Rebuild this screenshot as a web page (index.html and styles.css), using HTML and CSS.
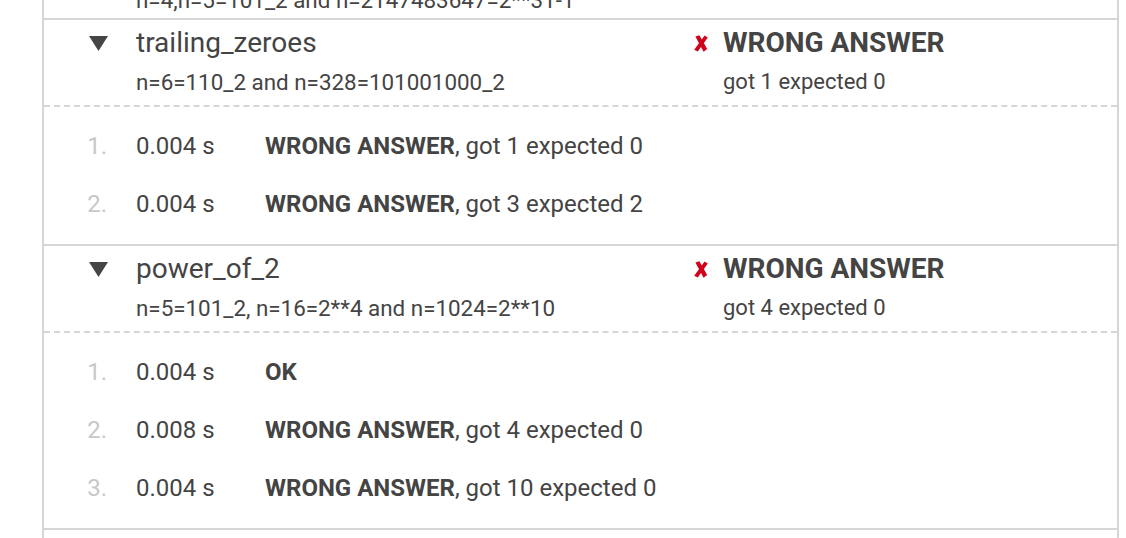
FILE: index.html
```html
<!DOCTYPE html>
<html>
<head>
<meta charset="utf-8">
<link rel="stylesheet" href="styles.css">
</head>
<body>
<div class="results">
  <section class="problem collapsed">
    <div class="head">
      <span class="toggle"><svg width="19" height="15" viewBox="0 0 19 15"><polygon points="0,0 19,0 9.5,15" fill="#454545"/></svg></span>
      <span class="title">is_power</span>
      <span class="mark"></span>
      <span class="status">OK</span>
      <span class="desc">n=4,n=5=101_2 and n=2147483647=2**31-1</span>
      <span class="detail"></span>
    </div>
  </section>

  <section class="problem">
    <div class="head">
      <span class="toggle"><svg width="19" height="15" viewBox="0 0 19 15"><polygon points="0,0 19,0 9.5,15" fill="#454545"/></svg></span>
      <span class="title">trailing_zeroes</span>
      <span class="mark"><svg width="14" height="17" viewBox="0 0 14 17"><path d="M1.4 1.6 L5.4 0.2 L13.2 14 L9.6 16.8 Z" fill="#d0021b"/><path d="M10.6 0.4 L13.8 2.4 L3.8 16.6 L0.2 14.8 Z" fill="#d0021b"/></svg></span>
      <span class="status">WRONG ANSWER</span>
      <span class="desc">n=6=110_2 and n=328=101001000_2</span>
      <span class="detail">got 1 expected 0</span>
    </div>
    <ol class="tests">
      <li class="test"><span class="num">1.</span><span class="time">0.004 s</span><span class="msg"><b>WRONG ANSWER</b>, got 1 expected 0</span></li>
      <li class="test"><span class="num">2.</span><span class="time">0.004 s</span><span class="msg"><b>WRONG ANSWER</b>, got 3 expected 2</span></li>
    </ol>
  </section>

  <section class="problem">
    <div class="head">
      <span class="toggle"><svg width="19" height="15" viewBox="0 0 19 15"><polygon points="0,0 19,0 9.5,15" fill="#454545"/></svg></span>
      <span class="title">power_of_2</span>
      <span class="mark"><svg width="14" height="17" viewBox="0 0 14 17"><path d="M1.4 1.6 L5.4 0.2 L13.2 14 L9.6 16.8 Z" fill="#d0021b"/><path d="M10.6 0.4 L13.8 2.4 L3.8 16.6 L0.2 14.8 Z" fill="#d0021b"/></svg></span>
      <span class="status">WRONG ANSWER</span>
      <span class="desc">n=5=101_2, n=16=2**4 and n=1024=2**10</span>
      <span class="detail">got 4 expected 0</span>
    </div>
    <ol class="tests">
      <li class="test"><span class="num">1.</span><span class="time">0.004 s</span><span class="msg"><b>OK</b></span></li>
      <li class="test"><span class="num">2.</span><span class="time">0.008 s</span><span class="msg"><b>WRONG ANSWER</b>, got 4 expected 0</span></li>
      <li class="test"><span class="num">3.</span><span class="time">0.004 s</span><span class="msg"><b>WRONG ANSWER</b>, got 10 expected 0</span></li>
    </ol>
  </section>

  <section class="problem">
    <div class="head">
      <span class="toggle"></span>
      <span class="title">next</span>
    </div>
  </section>
</div>
</body>
</html>
```
FILE: styles.css
```css
html, body {
  margin: 0;
  padding: 0;
  background: #fff;
  overflow: hidden;
}
body {
  font-family: Roboto, "Liberation Sans", sans-serif;
  color: #444;
}
.results {
  margin: -62px 0 0 42px;
  width: 1073px;
  border-left: 2px solid #d6d6d6;
  border-right: 2px solid #d6d6d6;
}
.problem {
  border-top: 2px solid #d6d6d6;
}
.problem:first-child {
  border-top: none;
}
.head {
  display: grid;
  grid-template-columns: 47px 558px 29px 1fr;
  grid-template-rows: 28px 26px;
  row-gap: 12px;
  padding: 9px 0 10px 45px;
  border-bottom: 2px dashed #d6d6d6;
}
.collapsed .head {
  padding-bottom: 5px;
  border-bottom: none;
}
.toggle {
  display: flex;
  align-items: center;
}
.title {
  font-size: 28px;
  line-height: 28px;
  white-space: nowrap;
}
.mark {
  display: flex;
  align-items: center;
  padding-top: 1px;
}
.status {
  font-size: 28px;
  line-height: 28px;
  font-weight: 700;
  white-space: nowrap;
}
.desc {
  grid-column: 2 / 4;
  font-size: 22.4px;
  line-height: 26px;
  white-space: nowrap;
}
.detail {
  grid-column: 4;
  font-size: 22px;
  line-height: 26px;
  white-space: nowrap;
}
.tests {
  list-style: none;
  margin: 0;
  padding: 10px 0 11px 39px;
}
.test {
  display: grid;
  grid-template-columns: 24px 29px 129px 1fr;
  height: 58px;
  align-items: center;
  font-size: 24px;
  white-space: nowrap;
}
.num {
  grid-column: 1;
  text-align: right;
  color: #c8c8c8;
}
.time {
  grid-column: 3;
}
.msg {
  grid-column: 4;
}
.msg b {
  font-weight: 700;
}
```
